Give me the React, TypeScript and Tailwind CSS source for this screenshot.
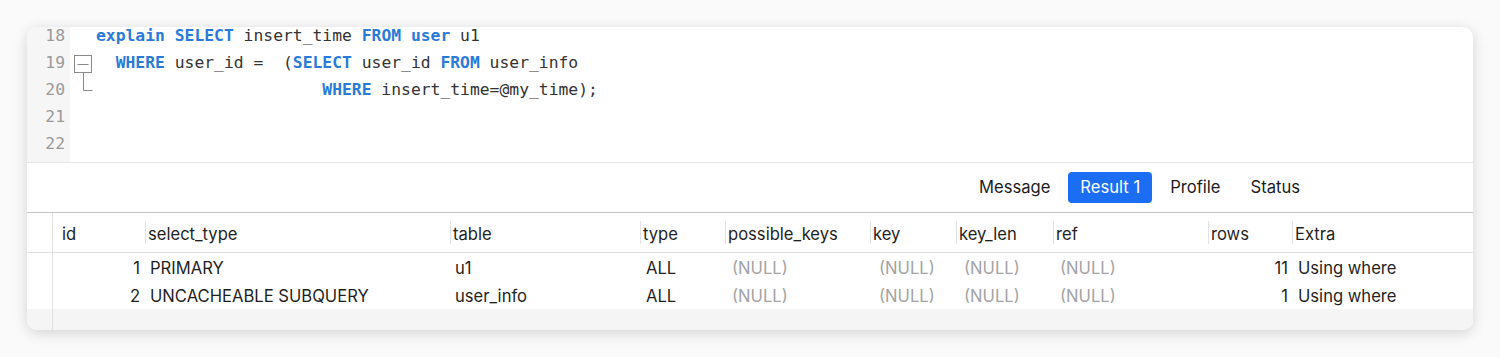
import React from "react";

const mono = { fontFamily: '"DejaVu Sans Mono", "Liberation Mono", monospace' };

const K = ({ children }: { children: React.ReactNode }) => (
  <span className="font-bold text-[#2a7bd8]">{children}</span>
);

const columns = [
  { name: "id", w: "w-[92px]" },
  { name: "select_type", w: "w-[305px]" },
  { name: "table", w: "w-[190px]" },
  { name: "type", w: "w-[85px]" },
  { name: "possible_keys", w: "w-[145px]" },
  { name: "key", w: "w-[86px]" },
  { name: "key_len", w: "w-[97px]" },
  { name: "ref", w: "w-[155px]" },
  { name: "rows", w: "w-[84px]" },
  { name: "Extra", w: "flex-1" },
];

const rows = [
  { id: "1", selectType: "PRIMARY", table: "u1", type: "ALL", rows: "11", extra: "Using where" },
  { id: "2", selectType: "UNCACHEABLE SUBQUERY", table: "user_info", type: "ALL", rows: "1", extra: "Using where" },
];

const Null = ({ w, pl }: { w: string; pl: string }) => (
  <div className={`${w} ${pl} text-[#a3a3a3]`}>(NULL)</div>
);

const App = () => {
  return (
    <div className="w-[1500px] h-[357px] bg-[#fafafa] pt-[27px] pl-[27px]">
      <div
        className="w-[1446px] h-[303px] bg-white rounded-[10px] overflow-hidden shadow-[0_3px_14px_rgba(0,0,0,0.16)] flex flex-col"
        style={{ fontFamily: 'Inter, "Liberation Sans", sans-serif' }}
      >
        {/* Editor */}
        <div className="h-[135px] flex overflow-hidden">
          <div className="w-[43px] bg-[#f6f6f6] -mt-[5px] pr-[5px] text-right text-[#9a9a9a] text-[16.35px]" style={mono}>
            {[18, 19, 20, 21, 22].map((n) => (
              <div key={n} className="h-[27px] leading-[27px]">{n}</div>
            ))}
          </div>
          <div className="w-[26px] -mt-[5px]">
            <svg width="26" height="140" viewBox="0 0 26 140" fill="none" stroke="#8a8a8a" strokeWidth="1">
              <rect x="4.5" y="33.5" width="17" height="17" />
              <path d="M7.5 42.5h11" />
              <path d="M13.5 50.5v18h9" />
            </svg>
          </div>
          <div className="-mt-[5px] text-[16.35px] text-[#333] whitespace-pre" style={mono}>
            <div className="h-[27px] leading-[27px]">
              <K>explain</K> <K>SELECT</K> insert_time <K>FROM</K> <K>user</K> u1
            </div>
            <div className="h-[27px] leading-[27px]">
              {"  "}<K>WHERE</K> user_id =  (<K>SELECT</K> user_id <K>FROM</K> user_info
            </div>
            <div className="h-[27px] leading-[27px]">
              {"                       "}<K>WHERE</K> insert_time=@my_time);
            </div>
            <div className="h-[27px]" />
            <div className="h-[27px]" />
          </div>
        </div>

        {/* Tabs */}
        <div className="h-[51px] border-t border-[#e6e6e6] border-b border-b-[#c6c6c6] flex items-center justify-end pr-[161px] gap-[6px] text-[16.6px] text-[#1c1c1c]">
          <button className="h-[31px] px-[12px] rounded-[4px]">Message</button>
          <button className="h-[31px] px-[12px] rounded-[4px] bg-[#1b6ef3] text-white">Result 1</button>
          <button className="h-[31px] px-[12px] rounded-[4px]">Profile</button>
          <button className="h-[31px] px-[12px] rounded-[4px]">Status</button>
        </div>

        {/* Grid */}
        <div className="flex-1 flex text-[16.6px] text-[#1f1f1f]">
          <div className="w-[26px] border-r border-[#e2e2e2] flex flex-col">
            <div className="h-[40px] border-b border-[#e2e2e2]" />
            <div className="h-[56px]" />
            <div className="flex-1 bg-[#f5f5f5]" />
          </div>
          <div className="flex-1 flex flex-col">
            <div className="h-[40px] border-b border-[#e2e2e2] flex items-center">
              {columns.map((c, i) => (
                <div key={c.name} className={`${c.w} flex items-center`}>
                  {i > 0 && <div className="w-px h-[23px] bg-[#e2e2e2]" />}
                  <span className={`pt-[3px] ${i === 0 ? "pl-[9px]" : "pl-[2px]"}`}>{c.name}</span>
                </div>
              ))}
            </div>
            {rows.map((r) => (
              <div key={r.id} className="h-[28px] pt-[3px] flex items-center">
                <div className="w-[92px] text-right pr-[5px]">{r.id}</div>
                <div className="w-[305px] pl-[5px]">{r.selectType}</div>
                <div className="w-[190px] pl-[5px]">{r.table}</div>
                <div className="w-[85px] pl-[6px]">{r.type}</div>
                <Null w="w-[145px]" pl="pl-[7px]" />
                <Null w="w-[86px]" pl="pl-[9px]" />
                <Null w="w-[97px]" pl="pl-[8px]" />
                <Null w="w-[155px]" pl="pl-[7px]" />
                <div className="w-[84px] text-right pr-[4px]">{r.rows}</div>
                <div className="flex-1 pl-[6px]">{r.extra}</div>
              </div>
            ))}
            <div className="flex-1 bg-[#f5f5f5]" />
          </div>
        </div>
      </div>
    </div>
  );
};

export default App;
